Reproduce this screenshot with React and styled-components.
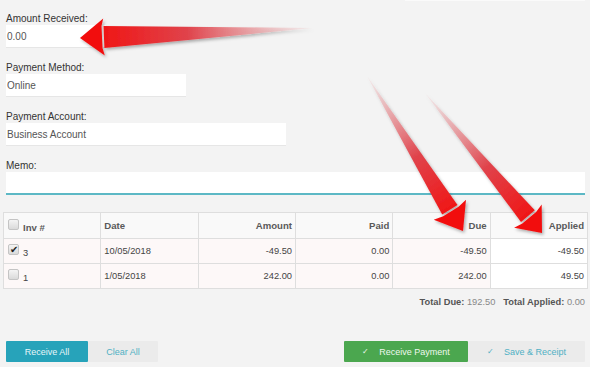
import React from "react";
import styled, { createGlobalStyle } from "styled-components";

const Global = createGlobalStyle`
  html, body { margin: 0; padding: 0; background: #f3f3f3; }
  body { font-family: "Liberation Sans", Arial, sans-serif; color: #333; }
  * { box-sizing: border-box; }
`;

const Page = styled.div`
  position: relative;
  width: 590px;
  height: 367px;
  overflow: hidden;
  background: #f3f3f3;
`;

const TopEdge = styled.div`
  height: 1px;
  width: 180px;
  margin-left: 405px;
  background: #fafafa;
`;

const Form = styled.div`
  display: flex;
  flex-direction: column;
  gap: 13px;
  padding: 11px 5px 0 6px;
`;

const Group = styled.div`
  display: flex;
  flex-direction: column;
`;

const Label = styled.div`
  font-size: 10px;
  line-height: 13px;
  height: 13px;
  color: #333;
`;

const Input = styled.div`
  width: ${(p) => p.$w};
  height: 23px;
  background: #fff;
  border-bottom: ${(p) => (p.$focus ? "2px solid #5cb8c5" : "1px solid #e6e6e6")};
  font-size: 10px;
  color: #555;
  display: flex;
  align-items: center;
  padding-left: 1px;
`;

const Table = styled.div`
  margin: 17px 2px 0 3px;
  display: grid;
  grid-template-columns: repeat(6, 1fr);
  border-top: 1px solid #dedede;
  border-left: 1px solid #dedede;
  font-size: 9.3px;
`;

const Cell = styled.div`
  height: ${(p) => (p.$head ? "26px" : "25px")};
  border-right: 1px solid #dedede;
  border-bottom: 1px solid #dedede;
  background: ${(p) => (p.$head ? "#f9f9f9" : p.$white ? "#ffffff" : "#fdf8f8")};
  color: ${(p) => (p.$head ? "#5a5a5a" : "#444")};
  font-weight: ${(p) => (p.$head ? "bold" : "normal")};
  font-size: ${(p) => (p.$head ? "9.6px" : "9.3px")};
  display: flex;
  align-items: center;
  justify-content: ${(p) => (p.$right ? "flex-end" : "flex-start")};
  padding: ${(p) => (p.$right ? "0 3px 0 0" : "0 0 0 3px")};
  gap: 4px;
`;

const Box = styled.span`
  width: 11px;
  height: 11px;
  margin-left: 1px;
  border: 1px solid #c4c4c4;
  border-radius: 2px;
  background: linear-gradient(#f4f4f4, #dadada);
  display: inline-flex;
  align-items: center;
  justify-content: center;
  font-size: 10px;
  line-height: 1;
  color: #222;
  margin-top: -3px;
`;

const CellText = styled.span`
  margin-top: 4px;
`;

const Totals = styled.div`
  display: flex;
  justify-content: flex-end;
  gap: 8px;
  padding: 8px 5px 0 0;
  font-size: 9.3px;
  color: #888;
`;

const Total = styled.span`
  b { color: #555; }
`;

const Buttons = styled.div`
  display: flex;
  justify-content: space-between;
  padding: 34px 5px 0 6px;
`;

const BtnGroup = styled.div`
  display: flex;
`;

const Btn = styled.div`
  width: ${(p) => p.$w};
  height: 21px;
  background: ${(p) => p.$bg};
  color: ${(p) => p.$fg};
  border-radius: 1px;
  font-size: 9px;
  display: flex;
  align-items: center;
  justify-content: center;
`;

const Tick = styled.span`
  font-size: 8px;
  margin-right: ${(p) => p.$gap};
`;

const Overlay = styled.svg`
  position: absolute;
  left: 0;
  top: 0;
  pointer-events: none;
`;

function arrowPts(tail, tip, L, H, S, k = 0) {
  const dx = tip[0] - tail[0];
  const dy = tip[1] - tail[1];
  const len = Math.hypot(dx, dy);
  const ux = dx / len, uy = dy / len;
  const nx = -uy, ny = ux;
  const bx = tip[0] - ux * L, by = tip[1] - uy * L;
  const p = (x, y) => `${x.toFixed(1)},${y.toFixed(1)}`;
  const shaft = [p(tail[0], tail[1]), p(bx + nx * S, by + ny * S), p(bx - nx * S, by - ny * S)].join(" ");
  const head = [
    p(bx + nx * S + ux * 2, by + ny * S + uy * 2),
    p(bx + nx * H - ux * k, by + ny * H - uy * k),
    p(tip[0], tip[1]),
    p(bx - nx * H - ux * k, by - ny * H - uy * k),
    p(bx - nx * S + ux * 2, by - ny * S + uy * 2),
  ].join(" ");
  return { shaft, head, bx, by };
}

function Arrow({ id, tail, tip, L, H, S, k }) {
  const a = arrowPts(tail, tip, L, H, S, k);
  return (
    <g filter="url(#sh)">
      <defs>
        <linearGradient id={id} gradientUnits="userSpaceOnUse" x1={tail[0]} y1={tail[1]} x2={a.bx} y2={a.by}>
          <stop offset="0" stopColor="#f0c8ca" stopOpacity="0.2" />
          <stop offset="0.3" stopColor="#e99a9e" stopOpacity="0.85" />
          <stop offset="0.6" stopColor="#e0434b" />
          <stop offset="1" stopColor="#ef1717" />
        </linearGradient>
      </defs>
      <polygon points={a.shaft} fill={`url(#${id})`} />
      <polygon points={a.head} fill="#f20f0f" />
    </g>
  );
}

const rows = [
  { inv: "3", checked: true, date: "10/05/2018", amount: "-49.50", paid: "0.00", due: "-49.50", applied: "-49.50" },
  { inv: "1", checked: false, date: "1/05/2018", amount: "242.00", paid: "0.00", due: "242.00", applied: "49.50" },
];

export default function App() {
  return (
    <Page>
      <Global />
      <TopEdge />
      <Form>
        <Group>
          <Label>Amount Received:</Label>
          <Input $w="100px">0.00</Input>
        </Group>
        <Group>
          <Label>Payment Method:</Label>
          <Input $w="180px">Online</Input>
        </Group>
        <Group>
          <Label>Payment Account:</Label>
          <Input $w="280px">Business Account</Input>
        </Group>
        <Group>
          <Label>Memo:</Label>
          <Input $w="579px" $focus />
        </Group>
      </Form>
      <Table>
        <Cell $head>
          <Box />
          <CellText>Inv #</CellText>
        </Cell>
        <Cell $head>Date</Cell>
        <Cell $head $right>Amount</Cell>
        <Cell $head $right>Paid</Cell>
        <Cell $head $right>Due</Cell>
        <Cell $head $right>Applied</Cell>
        {rows.map((r) => (
          <React.Fragment key={r.inv}>
            <Cell>
              <Box>{r.checked ? "✔" : ""}</Box>
              <CellText>{r.inv}</CellText>
            </Cell>
            <Cell>{r.date}</Cell>
            <Cell $right>{r.amount}</Cell>
            <Cell $right>{r.paid}</Cell>
            <Cell $right>{r.due}</Cell>
            <Cell $right $white>{r.applied}</Cell>
          </React.Fragment>
        ))}
      </Table>
      <Totals>
        <Total><b>Total Due:</b> 192.50</Total>
        <Total><b>Total Applied:</b> 0.00</Total>
      </Totals>
      <Buttons>
        <BtnGroup>
          <Btn $w="82px" $bg="#27a3ba" $fg="#e8f6f9">Receive All</Btn>
          <Btn $w="70px" $bg="#ebebeb" $fg="#4fb0c4">Clear All</Btn>
        </BtnGroup>
        <BtnGroup>
          <Btn $w="124px" $bg="#4ba74f" $fg="#eef8ee"><Tick $gap="10px">✓</Tick>Receive Payment</Btn>
          <Btn $w="117px" $bg="#ebebeb" $fg="#4fb0c4"><Tick $gap="10px">✓</Tick>Save &amp; Receipt</Btn>
        </BtnGroup>
      </Buttons>
      <Overlay width="590" height="367" viewBox="0 0 590 367">
        <defs>
          <filter id="sh" x="-20%" y="-20%" width="140%" height="140%">
            <feDropShadow dx="1.5" dy="2" stdDeviation="1.8" floodColor="#000" floodOpacity="0.3" />
          </filter>
        </defs>
        <Arrow id="g1" tail={[313, 28]} tip={[80, 38]} L={24} H={18.5} S={11} k={0} />
        <Arrow id="g2" tail={[367, 76]} tip={[463, 231]} L={25} H={19} S={9} k={0} />
        <Arrow id="g3" tail={[425, 93]} tip={[542, 233]} L={22} H={18} S={9} k={0} />
      </Overlay>
    </Page>
  );
}
